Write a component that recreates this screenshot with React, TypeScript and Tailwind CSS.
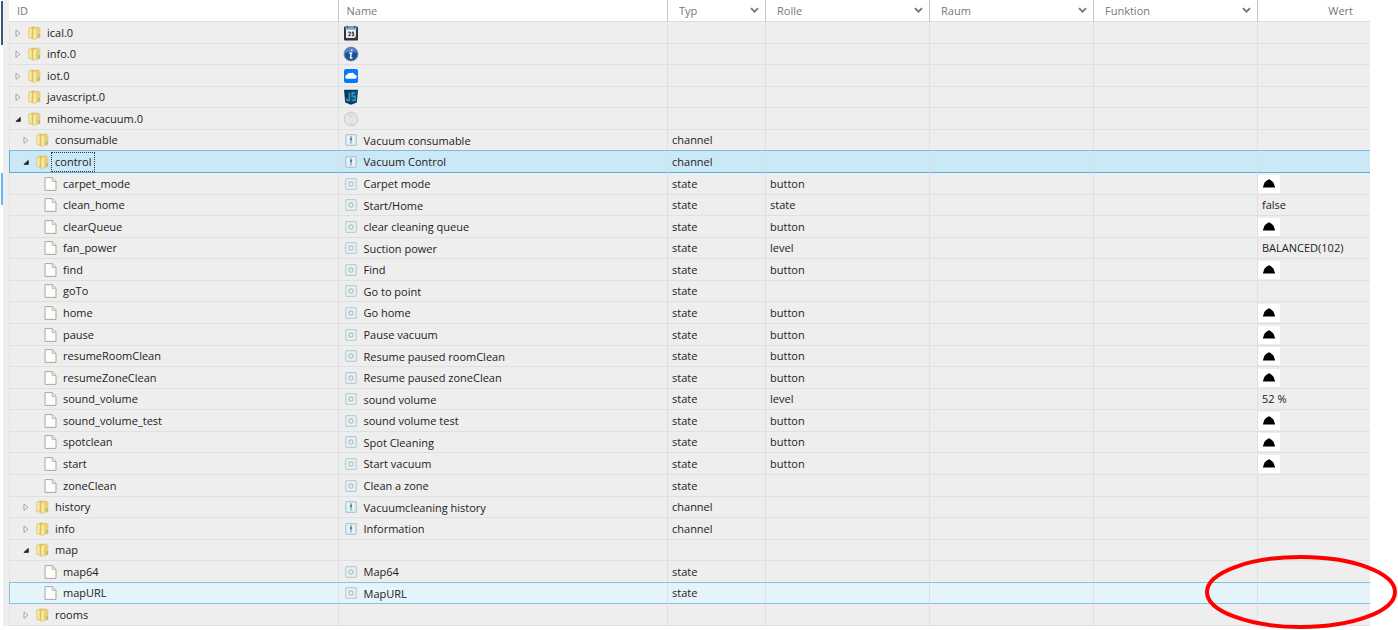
import { useState } from "react";

type Row = {
  id: string;
  level: number;
  kind: "folder" | "file";
  open?: boolean;
  icon?: string;
  name?: string;
  type?: string;
  role?: string;
  value?: string;
};

const state = (id: string, name: string, role = "", value = ""): Row => ({
  id,
  level: 2,
  kind: "file",
  icon: "state",
  name,
  type: "state",
  role,
  value,
});

const channel = (id: string, name: string, open = false): Row => ({
  id,
  level: 1,
  kind: "folder",
  open,
  icon: "channel",
  name,
  type: "channel",
});

const ROWS: Row[] = [
  { id: "ical.0", level: 0, kind: "folder", icon: "ical" },
  { id: "info.0", level: 0, kind: "folder", icon: "info" },
  { id: "iot.0", level: 0, kind: "folder", icon: "iot" },
  { id: "javascript.0", level: 0, kind: "folder", icon: "js" },
  { id: "mihome-vacuum.0", level: 0, kind: "folder", open: true, icon: "vacuum" },
  channel("consumable", "Vacuum consumable"),
  channel("control", "Vacuum Control", true),
  state("carpet_mode", "Carpet mode", "button"),
  state("clean_home", "Start/Home", "state", "false"),
  state("clearQueue", "clear cleaning queue", "button"),
  state("fan_power", "Suction power", "level", "BALANCED(102)"),
  state("find", "Find", "button"),
  state("goTo", "Go to point"),
  state("home", "Go home", "button"),
  state("pause", "Pause vacuum", "button"),
  state("resumeRoomClean", "Resume paused roomClean", "button"),
  state("resumeZoneClean", "Resume paused zoneClean", "button"),
  state("sound_volume", "sound volume", "level", "52 %"),
  state("sound_volume_test", "sound volume test", "button"),
  state("spotclean", "Spot Cleaning", "button"),
  state("start", "Start vacuum", "button"),
  state("zoneClean", "Clean a zone"),
  channel("history", "Vacuumcleaning history"),
  channel("info", "Information"),
  { id: "map", level: 1, kind: "folder", open: true },
  state("map64", "Map64"),
  state("mapURL", "MapURL"),
  { id: "rooms", level: 1, kind: "folder" },
];

const INDENT = ["pl-[5px]", "pl-[13px]", "pl-[34px]"];

const FolderIcon = () => (
  <svg width="13" height="14" viewBox="0 0 13 14" className="shrink-0">
    <path d="M.8 2 4.6.5v12L.8 11.4z" fill="#f0da84" stroke="#d6b65a" strokeWidth=".5" />
    <path d="M4.6 1.4 6.6.7v11L4.6 12.8z" fill="#d3b04c" />
    <path d="M6.6 1.2h4.2l1 1v9.6L6.6 12.4z" fill="#ecd474" stroke="#d4b453" strokeWidth=".5" />
    <path d="M5 2.8 8.6 1.2v11L5 13.7z" fill="#f9e9a2" stroke="#d8b856" strokeWidth=".5" />
    <path d="M2.2 2.6v8.2" stroke="#fdf5c8" />
    <path d="M10.9 8.2v3" stroke="#86bba8" strokeWidth="1.4" />
  </svg>
);

const FileIcon = () => (
  <svg width="13" height="14" viewBox="0 0 13 14" className="shrink-0">
    <path d="M1 .6h7.3L12 4.2v9.2H1z" fill="#fcfcf9" stroke="#a8a8a8" />
    <path d="M8.2.8v3.6h3.6" fill="#eee" stroke="#aaa" strokeWidth=".8" />
  </svg>
);

const Expander = ({ open }: { open?: boolean }) => (
  <svg width="6" height="8" viewBox="0 0 6 8">
    {open ? (
      <path d="M5.3 2.4v4H.9z" fill="#222" stroke="#222" strokeWidth=".8" strokeLinejoin="round" />
    ) : (
      <path d="M1 1.1v6.2L4.9 4.2z" fill="#fafafa" stroke="#999" strokeWidth=".9" />
    )}
  </svg>
);

const StateIcon = () => (
  <svg width="12" height="12" viewBox="0 0 12 12" className="shrink-0">
    <rect x=".7" y=".7" width="10.6" height="10.6" rx="1" fill="#ebf0f1" stroke="#b9cfd6" strokeWidth="1.2" />
    <circle cx="6" cy="6" r="2.1" fill="none" stroke="#a8c3cc" strokeWidth="1.1" />
  </svg>
);

const ChannelIcon = () => (
  <svg width="12" height="12" viewBox="0 0 12 12" className="shrink-0">
    <rect x=".7" y=".7" width="10.6" height="10.6" rx="1" fill="#e0edf1" stroke="#b0cbd4" strokeWidth="1.2" />
    <path d="M3.5 1.8v8.4M8.5 1.8v8.4" stroke="#f0f6f8" />
    <path d="M6 2v2M6 6.6v3" stroke="#6d9dae" strokeWidth="1" />
    <path d="M6 3.8v2.6" stroke="#3f7a90" strokeWidth="1.8" />
  </svg>
);

const AdapterIcon = ({ icon }: { icon: string }) => (
  <svg width="16" height="16" viewBox="0 0 16 16" className="shrink-0">
    {icon === "ical" && (
      <>
        <rect x="1" y="1.5" width="14" height="14" rx="1" fill="#30343b" />
        <path d="M2.5 2h11v3h-11z" fill="#7e9fca" />
        <path d="M3 4.6h10v8.4H3z" fill="#e9edf0" />
        <path d="M4.4.7v2.6M11.6.7v2.6" stroke="#456b9c" strokeWidth="1.4" />
        <path d="M5.2 7.2h2v1.8l-1.6 1.7h1.8M11 7.2H9.2v1.5h1.5v2H8.8" fill="none" stroke="#222" />
        <path d="M10.5 13l2.5-2.5V13z" fill="#8d949b" />
      </>
    )}
    {icon === "info" && (
      <>
        <circle cx="8" cy="8" r="7" fill="#1e4f9e" stroke="#8292ad" strokeWidth=".8" />
        <path d="M2 7a6 6 0 0 1 12 0c-4-2-8-1-12 0z" fill="#5484c8" />
        <path d="M8.9 3.5 8.6 5M6.2 7h3.2M8.3 6.6 7.5 12h2" fill="none" stroke="#e8f0fa" strokeWidth="1.5" />
      </>
    )}
    {icon === "iot" && (
      <>
        <rect x="1" y="1" width="14" height="14" rx="2" fill="#0878fb" />
        <path d="M4.3 10.8a2 2 0 0 1-.2-4 2.4 2.4 0 0 1 3-1.6 3 3 0 0 1 4.6 1.6 2 2 0 0 1 .2 4z" fill="#fff" />
      </>
    )}
    {icon === "js" && (
      <>
        <path d="M1 .8h14l-1.2 12.8L8 15.8l-5.8-2.2z" fill="#0b3a5c" />
        <path d="M8 2h5.8l-1 10.7L8 14.3z" fill="#0d4b75" />
        <path d="M6.4 3.4v8H4V9.4M12.3 4.1H9.2v3.3h2.9v3.9H8.6" fill="none" stroke="#3193cc" strokeWidth="1.6" />
      </>
    )}
    {icon === "vacuum" && (
      <>
        <circle cx="8" cy="8" r="6.9" fill="#e4e4e4" stroke="#cbcbcb" />
        <path d="M4.6 2.6 8 5.6l3.4-3" fill="#efefef" stroke="#c8c8c8" strokeWidth=".8" />
        <circle cx="8" cy="4.2" r="1.4" fill="#f6f6f6" stroke="#bbb" strokeWidth=".6" />
        <circle cx="8" cy="12.6" r=".8" fill="#c8c8c8" />
      </>
    )}
  </svg>
);

const NameIcon = ({ icon }: { icon: string }) => {
  if (icon === "state") return <StateIcon />;
  if (icon === "channel") return <ChannelIcon />;
  return <AdapterIcon icon={icon} />;
};

const BellIcon = () => (
  <svg width="12" height="9" viewBox="0 0 12 9">
    <path d="M5 .8Q6-.2 7 .8 11 2.8 11.6 7.2h.4v1.3H0V7.2h.4Q1 2.8 5 .8z" fill="#000" />
  </svg>
);

const FilterSelect = ({ label }: { label: string }) => (
  <div className="relative">
    <select
      aria-label={label}
      className="block h-[21px] w-full appearance-none bg-transparent pl-[11px] text-[11px] text-[#777] outline-none"
    >
      <option>{label}</option>
    </select>
    <svg width="9" height="7" viewBox="0 0 9 7" className="pointer-events-none absolute right-[6px] top-[7px]">
      <path d="M1 1.2l3.5 3.5L8 1.2" fill="none" stroke="#777" strokeWidth="1.9" />
    </svg>
  </div>
);

const rowColors = (id: string) => {
  if (id === "control")
    return "bg-[#cbe8f6] border-b-[#56b1dd] shadow-[0_-1px_0_#7bbfe0] first:border-l-[#56b1dd]";
  if (id === "mapURL")
    return "bg-[#e5f3fb] border-b-[#83c3df] shadow-[0_-1px_0_#83c3df] first:border-l-[#83c3df]";
  return "border-b-[#e0e0e0] first:border-l-[#e4e4e4]";
};

const TreeRow = ({ row, index }: { row: Row; index: number }) => {
  const cell = `border-b border-r border-r-[#e0e0e0] last:border-r-0 first:border-l p-0 ${rowColors(row.id)}`;
  return (
    <tr className={(index % 7) % 2 === 1 ? "h-[21px]" : "h-[22px]"}>
      <td className={cell}>
        <div className={`flex h-[20px] items-center ${INDENT[row.level]}`}>
          {row.kind === "folder" && (
            <button type="button" aria-label={`Toggle ${row.id}`} className="mr-[6px] w-[7px]">
              <Expander open={row.open} />
            </button>
          )}
          {row.kind === "folder" ? <FolderIcon /> : <FileIcon />}
          <span
            className={`ml-[2px] border border-dotted px-[3px] leading-[18px] ${
              row.id === "control" ? "border-[#333]" : "border-transparent"
            }`}
          >
            {row.id}
          </span>
        </div>
      </td>
      <td className={cell}>
        <div className="flex h-[20px] items-center pl-[4px]">
          {row.icon && (
            <span className="flex w-[16px] justify-center">
              <NameIcon icon={row.icon} />
            </span>
          )}
          <span className="pl-[5px] pt-px">{row.name}</span>
        </div>
      </td>
      <td className={`${cell} pl-[4px]`}>{row.type}</td>
      <td className={`${cell} pl-[4px]`}>{row.role}</td>
      <td className={cell}></td>
      <td className={cell}></td>
      <td className={cell}>
        {row.role === "button" ? (
          <button
            type="button"
            aria-label={`Press ${row.id}`}
            className="flex h-[18px] w-[22px] items-center justify-center bg-white"
          >
            <BellIcon />
          </button>
        ) : (
          <span className="pl-[4px]">{row.value}</span>
        )}
      </td>
    </tr>
  );
};

export default function App() {
  const [idFilter, setIdFilter] = useState("");
  const [nameFilter, setNameFilter] = useState("");
  const head = "border-b border-r border-b-[#ddd] border-r-[#c4c4c4] last:border-r-0 p-0 font-normal";
  const input = "block h-[21px] w-full bg-transparent pl-[8px] outline-none placeholder:text-[#777]";

  return (
    <div className="relative flex bg-white pb-[3px] font-['Open_Sans',sans-serif] text-[11px] leading-[20px] text-[#222]">
      <aside className="w-[3px] shrink-0 pl-px pt-px">
        <div className="h-[44px] bg-[#36597b]" />
        <div className="mt-[128px] h-[32px] bg-[#64b5f6]" />
      </aside>
      <main className="mr-[28px] flex-1 bg-[#eee] pl-[6px]">
        <table className="w-full table-fixed border-separate border-spacing-0">
          <colgroup>
            <col />
            <col />
            <col className="w-[98px]" />
            <col className="w-[164px]" />
            <col className="w-[164px]" />
            <col className="w-[164px]" />
            <col className="w-[112px]" />
          </colgroup>
          <thead className="bg-white text-[#777]">
            <tr className="h-[22px]">
              <th className={head}>
                <input
                  aria-label="ID"
                  placeholder="ID"
                  value={idFilter}
                  onChange={(e) => setIdFilter(e.target.value)}
                  className={input}
                />
              </th>
              <th className={head}>
                <input
                  aria-label="Name"
                  placeholder="Name"
                  value={nameFilter}
                  onChange={(e) => setNameFilter(e.target.value)}
                  className={input}
                />
              </th>
              <th className={head}><FilterSelect label="Typ" /></th>
              <th className={head}><FilterSelect label="Rolle" /></th>
              <th className={head}><FilterSelect label="Raum" /></th>
              <th className={head}><FilterSelect label="Funktion" /></th>
              <th className={`${head} text-right`}>
                <span className="pr-[17px]">Wert</span>
              </th>
            </tr>
          </thead>
          <tbody>
            {ROWS.map((row, i) => (
              <TreeRow key={`${row.level}-${row.id}`} row={row} index={i} />
            ))}
          </tbody>
        </table>
      </main>
      {/* red marker around the mapURL value */}
      <svg
        width="194"
        height="76"
        viewBox="0 0 194 76"
        className="pointer-events-none absolute bottom-0 right-0"
      >
        <ellipse cx="97" cy="39" rx="94" ry="35" fill="none" stroke="#f00" strokeWidth="4" />
      </svg>
    </div>
  );
}
